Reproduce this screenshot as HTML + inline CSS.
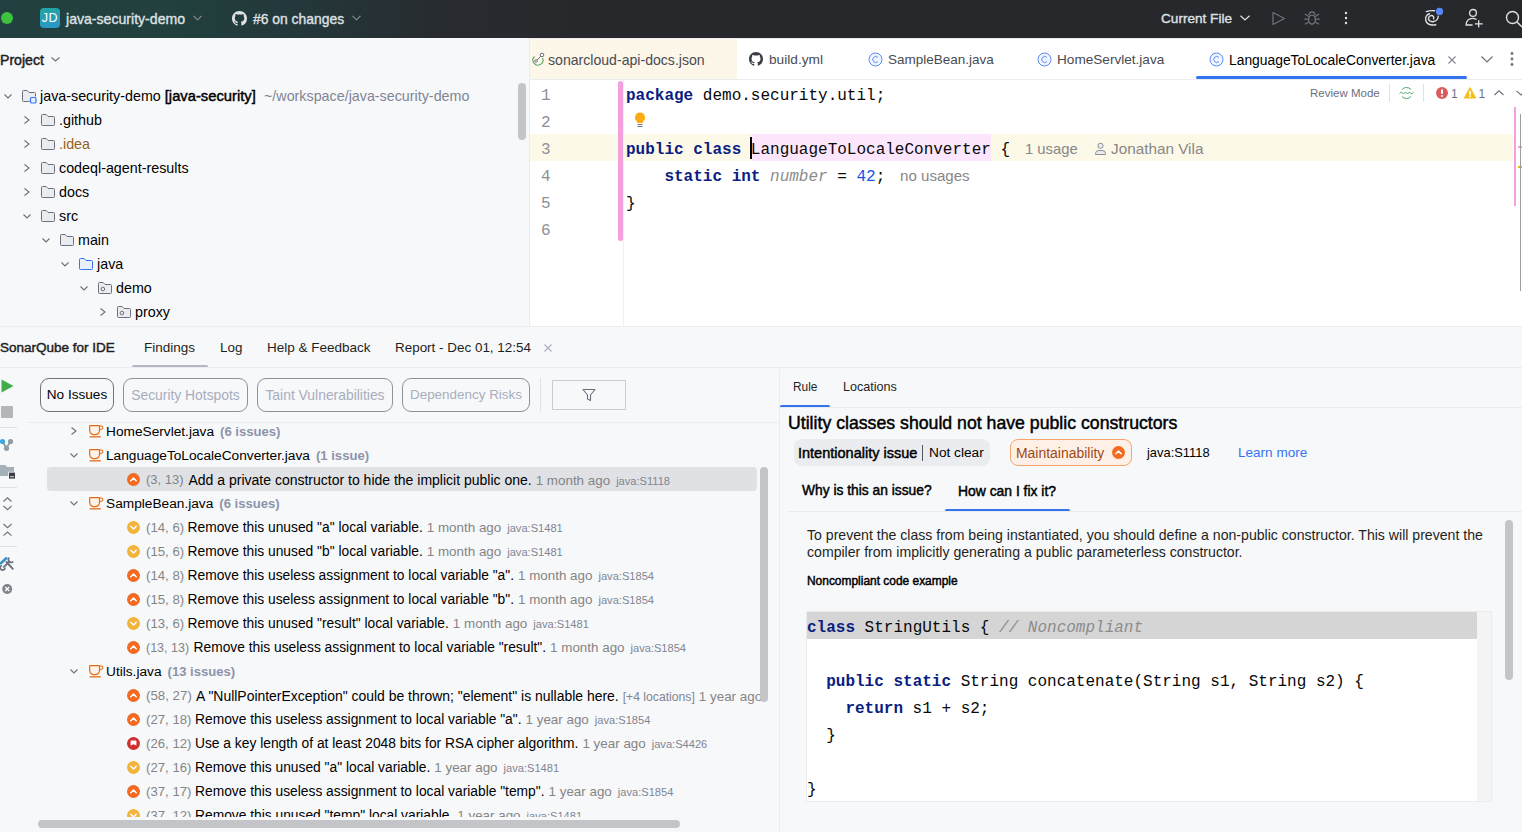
<!DOCTYPE html>
<html><head><meta charset="utf-8">
<style>
*{margin:0;padding:0;box-sizing:border-box}
html,body{width:1522px;height:832px;overflow:hidden;background:#F7F8FA;font-family:"Liberation Sans",sans-serif;color:#000}
.a{position:absolute;white-space:pre}
svg.a{overflow:visible}
.mono{font-family:"Liberation Mono",monospace}
#top{position:absolute;left:0;top:0;width:1522px;height:38px;background:linear-gradient(90deg,#22403F 0px,#21403E 170px,#24373A 300px,#272B2F 440px,#27282C 600px)}
.tw{color:#DFE1E5;font-weight:normal;font-size:14.1px;line-height:16px;-webkit-text-stroke:0.35px #DFE1E5}
.sb{font-weight:normal !important;-webkit-text-stroke:0.45px currentColor}
.kw{color:#0A1D82;font-weight:bold}
.code{font-family:"Liberation Mono",monospace;font-size:16px;line-height:27px;color:#080808}
</style></head><body>

<div id="top">
  <div class="a" style="left:1px;top:12px;width:12px;height:12px;border-radius:6px;background:#3EC23E"></div>
  <div class="a" style="left:40px;top:8px;width:20px;height:20px;border-radius:4px;background:linear-gradient(160deg,#22A6A0,#2A95CC);color:#fff;font-size:12.5px;line-height:20px;text-align:center;letter-spacing:0.5px">JD</div>
  <div class="a tw" style="left:66px;top:11px">java-security-demo</div>
  <svg class="a" style="left:193px;top:15px" width="9" height="6" viewBox="0 0 9 6"><path d="M0.5 0.8L4.5 4.8L8.5 0.8" fill="none" stroke="#8C9096" stroke-width="1.1"/></svg>
  <svg class="a" style="left:232px;top:11px" width="15" height="15" viewBox="0 0 16 16"><path fill="#DFE1E5" d="M8 0C3.58 0 0 3.58 0 8c0 3.54 2.29 6.53 5.47 7.59.4.07.55-.17.55-.38 0-.19-.01-.82-.01-1.49-2.01.37-2.530-.49-2.69-.94-.09-.23-.48-.94-.82-1.13-.28-.15-.68-.52-.01-.53.63-.01 1.08.58 1.23.82.72 1.21 1.87.87 2.33.66.07-.52.28-.87.51-1.07-1.78-.2-3.64-.89-3.64-3.95 0-.87.31-1.59.82-2.15-.08-.2-.36-1.020.08-2.12 0 0 .67-.21 2.2.82.64-.18 1.32-.27 2-.27.68 0 1.36.09 2 .27 1.53-1.04 2.2-.82 2.2-.82.44 1.1.16 1.92.08 2.12.51.56.82 1.27.82 2.15 0 3.07-1.87 3.75-3.65 3.95.29.25.54.73.54 1.48 0 1.07-.01 1.93-.01 2.2 0 .21.15.46.55.38A8.013 8.013 0 0016 8c0-4.42-3.58-8-8-8z"/></svg>
  <div class="a tw" style="left:253px;top:11px;font-size:13.9px">#6 on changes</div>
  <svg class="a" style="left:352px;top:15px" width="9" height="6" viewBox="0 0 9 6"><path d="M0.5 0.8L4.5 4.8L8.5 0.8" fill="none" stroke="#8C9096" stroke-width="1.1"/></svg>
  <div class="a tw" style="left:1161px;top:11px;font-size:13.6px">Current File</div>
  <svg class="a" style="left:1240px;top:15px" width="10" height="6" viewBox="0 0 10 6"><path d="M0.5 0.8L5 5L9.5 0.8" fill="none" stroke="#DFE1E5" stroke-width="1.2"/></svg>
  <svg class="a" style="left:1271px;top:11px" width="15" height="15" viewBox="0 0 15 15"><path d="M2 1.5L13.5 7.5L2 13.5Z" fill="none" stroke="#6F737A" stroke-width="1.2" stroke-linejoin="round"/></svg>
  <svg class="a" style="left:1304px;top:10px" width="16" height="16" viewBox="0 0 16 16" fill="none" stroke="#6F737A" stroke-width="1.3" stroke-linecap="round"><path d="M5.3 4.6A2.7 2.7 0 0 1 10.7 4.6"/><ellipse cx="8" cy="9.6" rx="3.4" ry="4.5"/><path d="M1.3 4.3L4.5 6.2M0.8 9.2H4.5M1.3 14L4.5 12.2M14.7 4.3L11.5 6.2M15.2 9.2H11.5M14.7 14L11.5 12.2"/></svg>
  <svg class="a" style="left:1344px;top:10px" width="4" height="16" viewBox="0 0 4 16"><circle cx="2" cy="3" r="1.2" fill="#DFE1E5"/><circle cx="2" cy="8" r="1.2" fill="#DFE1E5"/><circle cx="2" cy="13" r="1.2" fill="#DFE1E5"/></svg>
  <svg class="a" style="left:1420px;top:4px" width="26" height="26" viewBox="0 0 26 26" fill="none" stroke="#DFE1E5" stroke-width="1.4" stroke-linecap="round"><path d="M6.3 7.6Q10.5 6.2 14.5 6.8"/><path d="M13.5 14.8C14.5 13 13 11.3 11 11.6C8.3 12 7.6 15.3 9.6 16.8C11.8 18.5 16 17.6 17.5 15C18.2 13.8 18.3 12.8 18.2 12.2"/><path d="M9.5 9.8C6.5 10.5 5 13.5 5.8 16.5C6.8 20 11 21.5 15.8 20.8"/><circle cx="19.5" cy="7.4" r="3.6" fill="#548AF7" stroke="none"/></svg>
  <svg class="a" style="left:1460px;top:4px" width="30" height="28" viewBox="0 0 30 28" fill="none" stroke="#DFE1E5" stroke-width="1.3"><circle cx="13" cy="8.9" r="3.4"/><path d="M16.5 15.6C15.3 14.7 14 14.3 12.6 14.3C9 14.3 6.2 16.8 6.1 21H12.6"/><path d="M18.7 16.3V23.6M14.9 19.9H22.8"/></svg>
  <svg class="a" style="left:1505px;top:10px" width="18" height="18" viewBox="0 0 18 18" fill="none" stroke="#DFE1E5" stroke-width="1.4"><circle cx="7.5" cy="7.5" r="6"/><path d="M12 12l5 5"/></svg>
</div>
<div class="a sb" style="left:0px;top:52.0px;font-size:14.1px;line-height:16px;color:#1E1F22;font-weight:normal;">Project</div>
<svg class="a" style="left:51px;top:57px" width="9" height="5" viewBox="0 0 9 5"><path d="M0.5 0.5L4.5 4L8.5 0.5" fill="none" stroke="#6C707E" stroke-width="1.1"/></svg>
<svg class="a" style="left:4px;top:94px" width="8" height="5" viewBox="0 0 8 5"><path d="M0.5 0.5L4.0 4L7.5 0.5" fill="none" stroke="#6C707E" stroke-width="1.1"/></svg>
<svg class="a" style="left:22px;top:90px" width="16" height="14" viewBox="0 0 16 14"><path d="M7.5 11.5H1.5A1 1 0 0 1 0.5 10.5V1.5A1 1 0 0 1 1.5 0.5H5.2L7 2.5H12.5A1 1 0 0 1 13.5 3.5V6.5" fill="#EBECF0" stroke="#6C707E" stroke-width="1"/><rect x="8.5" y="7.5" width="5.5" height="5.5" rx="1.3" fill="#E7EFFD" stroke="#3574F0" stroke-width="1.2"/></svg>
<div class="a " style="left:40px;top:87.0px;font-size:14.3px;line-height:18px;color:#000;font-weight:normal;">java-security-demo <span class="sb" style="font-size:14.75px">[java-security]</span></div>
<div class="a " style="left:264px;top:87.0px;font-size:14.3px;line-height:18px;color:#818594;font-weight:normal;">~/workspace/java-security-demo</div>
<svg class="a" style="left:24px;top:116px" width="6" height="8" viewBox="0 0 6 8"><path d="M0.5 0.5L5 4.0L0.5 7.5" fill="none" stroke="#6C707E" stroke-width="1.1"/></svg>
<svg class="a" style="left:41px;top:114px" width="16" height="14" viewBox="0 0 16 14"><path d="M1.5 0.5H5.2L7 2.5H12.5A1 1 0 0 1 13.5 3.5V10.5A1 1 0 0 1 12.5 11.5H1.5A1 1 0 0 1 0.5 10.5V1.5A1 1 0 0 1 1.5 0.5Z" fill="#EBECF0" stroke="#6C707E" stroke-width="1"/></svg>
<div class="a " style="left:59px;top:111.0px;font-size:14.3px;line-height:18px;color:#000;font-weight:normal;">.github</div>
<svg class="a" style="left:24px;top:140px" width="6" height="8" viewBox="0 0 6 8"><path d="M0.5 0.5L5 4.0L0.5 7.5" fill="none" stroke="#6C707E" stroke-width="1.1"/></svg>
<svg class="a" style="left:41px;top:138px" width="16" height="14" viewBox="0 0 16 14"><path d="M1.5 0.5H5.2L7 2.5H12.5A1 1 0 0 1 13.5 3.5V10.5A1 1 0 0 1 12.5 11.5H1.5A1 1 0 0 1 0.5 10.5V1.5A1 1 0 0 1 1.5 0.5Z" fill="#EBECF0" stroke="#6C707E" stroke-width="1"/></svg>
<div class="a " style="left:59px;top:135.0px;font-size:14.3px;line-height:18px;color:#94621C;font-weight:normal;">.idea</div>
<svg class="a" style="left:24px;top:164px" width="6" height="8" viewBox="0 0 6 8"><path d="M0.5 0.5L5 4.0L0.5 7.5" fill="none" stroke="#6C707E" stroke-width="1.1"/></svg>
<svg class="a" style="left:41px;top:162px" width="16" height="14" viewBox="0 0 16 14"><path d="M1.5 0.5H5.2L7 2.5H12.5A1 1 0 0 1 13.5 3.5V10.5A1 1 0 0 1 12.5 11.5H1.5A1 1 0 0 1 0.5 10.5V1.5A1 1 0 0 1 1.5 0.5Z" fill="#EBECF0" stroke="#6C707E" stroke-width="1"/></svg>
<div class="a " style="left:59px;top:159.0px;font-size:14.3px;line-height:18px;color:#000;font-weight:normal;">codeql-agent-results</div>
<svg class="a" style="left:24px;top:188px" width="6" height="8" viewBox="0 0 6 8"><path d="M0.5 0.5L5 4.0L0.5 7.5" fill="none" stroke="#6C707E" stroke-width="1.1"/></svg>
<svg class="a" style="left:41px;top:186px" width="16" height="14" viewBox="0 0 16 14"><path d="M1.5 0.5H5.2L7 2.5H12.5A1 1 0 0 1 13.5 3.5V10.5A1 1 0 0 1 12.5 11.5H1.5A1 1 0 0 1 0.5 10.5V1.5A1 1 0 0 1 1.5 0.5Z" fill="#EBECF0" stroke="#6C707E" stroke-width="1"/></svg>
<div class="a " style="left:59px;top:183.0px;font-size:14.3px;line-height:18px;color:#000;font-weight:normal;">docs</div>
<svg class="a" style="left:23px;top:214px" width="8" height="5" viewBox="0 0 8 5"><path d="M0.5 0.5L4.0 4L7.5 0.5" fill="none" stroke="#6C707E" stroke-width="1.1"/></svg>
<svg class="a" style="left:41px;top:210px" width="16" height="14" viewBox="0 0 16 14"><path d="M1.5 0.5H5.2L7 2.5H12.5A1 1 0 0 1 13.5 3.5V10.5A1 1 0 0 1 12.5 11.5H1.5A1 1 0 0 1 0.5 10.5V1.5A1 1 0 0 1 1.5 0.5Z" fill="#EBECF0" stroke="#6C707E" stroke-width="1"/></svg>
<div class="a " style="left:59px;top:207.0px;font-size:14.3px;line-height:18px;color:#000;font-weight:normal;">src</div>
<svg class="a" style="left:42px;top:238px" width="8" height="5" viewBox="0 0 8 5"><path d="M0.5 0.5L4.0 4L7.5 0.5" fill="none" stroke="#6C707E" stroke-width="1.1"/></svg>
<svg class="a" style="left:60px;top:234px" width="16" height="14" viewBox="0 0 16 14"><path d="M1.5 0.5H5.2L7 2.5H12.5A1 1 0 0 1 13.5 3.5V10.5A1 1 0 0 1 12.5 11.5H1.5A1 1 0 0 1 0.5 10.5V1.5A1 1 0 0 1 1.5 0.5Z" fill="#EBECF0" stroke="#6C707E" stroke-width="1"/></svg>
<div class="a " style="left:78px;top:231.0px;font-size:14.3px;line-height:18px;color:#000;font-weight:normal;">main</div>
<svg class="a" style="left:61px;top:262px" width="8" height="5" viewBox="0 0 8 5"><path d="M0.5 0.5L4.0 4L7.5 0.5" fill="none" stroke="#6C707E" stroke-width="1.1"/></svg>
<svg class="a" style="left:79px;top:258px" width="16" height="14" viewBox="0 0 16 14"><path d="M1.5 0.5H5.2L7 2.5H12.5A1 1 0 0 1 13.5 3.5V10.5A1 1 0 0 1 12.5 11.5H1.5A1 1 0 0 1 0.5 10.5V1.5A1 1 0 0 1 1.5 0.5Z" fill="#E7EFFD" stroke="#3574F0" stroke-width="1"/></svg>
<div class="a " style="left:97px;top:255.0px;font-size:14.3px;line-height:18px;color:#000;font-weight:normal;">java</div>
<svg class="a" style="left:80px;top:286px" width="8" height="5" viewBox="0 0 8 5"><path d="M0.5 0.5L4.0 4L7.5 0.5" fill="none" stroke="#6C707E" stroke-width="1.1"/></svg>
<svg class="a" style="left:98px;top:282px" width="16" height="14" viewBox="0 0 16 14"><path d="M1.5 0.5H5.2L7 2.5H12.5A1 1 0 0 1 13.5 3.5V10.5A1 1 0 0 1 12.5 11.5H1.5A1 1 0 0 1 0.5 10.5V1.5A1 1 0 0 1 1.5 0.5Z" fill="#EBECF0" stroke="#6C707E" stroke-width="1"/><circle cx="4.9" cy="7" r="1.8" fill="none" stroke="#6C707E" stroke-width="1"/></svg>
<div class="a " style="left:116px;top:279.0px;font-size:14.3px;line-height:18px;color:#000;font-weight:normal;">demo</div>
<svg class="a" style="left:100px;top:308px" width="6" height="8" viewBox="0 0 6 8"><path d="M0.5 0.5L5 4.0L0.5 7.5" fill="none" stroke="#6C707E" stroke-width="1.1"/></svg>
<svg class="a" style="left:117px;top:306px" width="16" height="14" viewBox="0 0 16 14"><path d="M1.5 0.5H5.2L7 2.5H12.5A1 1 0 0 1 13.5 3.5V10.5A1 1 0 0 1 12.5 11.5H1.5A1 1 0 0 1 0.5 10.5V1.5A1 1 0 0 1 1.5 0.5Z" fill="#EBECF0" stroke="#6C707E" stroke-width="1"/><circle cx="4.9" cy="7" r="1.8" fill="none" stroke="#6C707E" stroke-width="1"/></svg>
<div class="a " style="left:135px;top:303.0px;font-size:14.3px;line-height:18px;color:#000;font-weight:normal;">proxy</div>
<div class="a" style="left:518px;top:83px;width:8px;height:57px;background:#C4C5C8;border-radius:4px"></div>
<div class="a" style="left:529px;top:38px;width:1px;height:288px;background:#EBECF0;"></div>
<div class="a" style="left:530px;top:38px;width:992px;height:288px;background:#FFFFFF;"></div>
<div class="a" style="left:530px;top:38px;width:992px;height:1px;background:#EBECF0;"></div>
<div class="a" style="left:530px;top:79px;width:992px;height:1px;background:#EBECF0;"></div>
<div class="a" style="left:530px;top:39px;width:207px;height:40px;background:#FDF7EA;"></div>
<svg class="a" style="left:531px;top:52px" width="14" height="14" viewBox="0 0 14 14"><path d="M3.5 4.5A5 5 0 1 0 11.5 6" fill="none" stroke="#55A76A" stroke-width="1.1"/><path d="M5.5 8.5L10.5 3.5" stroke="#6C707E" stroke-width="1"/><circle cx="11" cy="3" r="1.8" fill="#fff" stroke="#6C707E" stroke-width="1"/><circle cx="5" cy="9" r="1.3" fill="#fff" stroke="#6C707E" stroke-width="0.9"/></svg>
<div class="a " style="left:548px;top:51.2px;font-size:14.1px;line-height:18px;color:#494B52;font-weight:normal;">sonarcloud-api-docs.json</div>
<svg class="a" style="left:749px;top:52px" width="14" height="14" viewBox="0 0 16 16"><path fill="#3C3F45" d="M8 0C3.58 0 0 3.58 0 8c0 3.54 2.29 6.53 5.47 7.59.4.07.55-.17.55-.38 0-.19-.01-.82-.01-1.49-2.01.37-2.53-.49-2.69-.94-.09-.23-.48-.94-.82-1.13-.28-.15-.68-.52-.01-.53.63-.01 1.08.58 1.23.82.72 1.21 1.87.87 2.33.66.07-.52.28-.87.51-1.07-1.78-.2-3.64-.89-3.64-3.95 0-.87.31-1.59.82-2.15-.08-.2-.36-1.02.08-2.12 0 0 .67-.21 2.2.82.64-.18 1.32-.27 2-.27.68 0 1.36.09 2 .27 1.53-1.04 2.2-.82 2.2-.82.44 1.1.16 1.92.08 2.12.51.56.82 1.27.82 2.15 0 3.07-1.87 3.75-3.65 3.95.29.25.54.73.54 1.48 0 1.07-.01 1.93-.01 2.2 0 .21.15.46.55.38A8.013 8.013 0 0016 8c0-4.42-3.58-8-8-8z"/></svg>
<div class="a " style="left:769px;top:51.2px;font-size:13.7px;line-height:18px;color:#494B52;font-weight:normal;">build.yml</div>
<svg class="a" style="left:868px;top:52px" width="15" height="15" viewBox="0 0 15 15"><circle cx="7.5" cy="7.5" r="6.5" fill="#EEF3FD" stroke="#5C8DF2" stroke-width="1"/><path d="M9.8 5.3A3 3 0 1 0 9.8 9.7" fill="none" stroke="#5C8DF2" stroke-width="1"/></svg>
<div class="a " style="left:888px;top:51.2px;font-size:13.5px;line-height:18px;color:#494B52;font-weight:normal;">SampleBean.java</div>
<svg class="a" style="left:1037px;top:52px" width="15" height="15" viewBox="0 0 15 15"><circle cx="7.5" cy="7.5" r="6.5" fill="#EEF3FD" stroke="#5C8DF2" stroke-width="1"/><path d="M9.8 5.3A3 3 0 1 0 9.8 9.7" fill="none" stroke="#5C8DF2" stroke-width="1"/></svg>
<div class="a " style="left:1057px;top:51.2px;font-size:13.6px;line-height:18px;color:#494B52;font-weight:normal;">HomeServlet.java</div>
<svg class="a" style="left:1209px;top:52px" width="15" height="15" viewBox="0 0 15 15"><circle cx="7.5" cy="7.5" r="6.5" fill="#EEF3FD" stroke="#5C8DF2" stroke-width="1"/><path d="M9.8 5.3A3 3 0 1 0 9.8 9.7" fill="none" stroke="#5C8DF2" stroke-width="1"/></svg>
<div class="a " style="left:1229px;top:51.2px;font-size:13.85px;line-height:18px;color:#000000;font-weight:normal;">LanguageToLocaleConverter.java</div>
<svg class="a" style="left:1448px;top:56px" width="8" height="8" viewBox="0 0 8 8"><path d="M0.5 0.5L7.5 7.5M7.5 0.5L0.5 7.5" stroke="#818594" stroke-width="1.1"/></svg>
<div class="a" style="left:1196px;top:76px;width:271px;height:3px;background:#3574F0;border-radius:1.5px"></div>
<svg class="a" style="left:1481px;top:56px" width="12" height="7" viewBox="0 0 12 7"><path d="M0.5 0.5L6.0 6L11.5 0.5" fill="none" stroke="#6C707E" stroke-width="1.2"/></svg>
<svg class="a" style="left:1510px;top:51px" width="4" height="16" viewBox="0 0 4 16"><circle cx="2" cy="2.5" r="1.4" fill="#6C707E"/><circle cx="2" cy="8" r="1.4" fill="#6C707E"/><circle cx="2" cy="13.5" r="1.4" fill="#6C707E"/></svg>
<div class="a " style="left:1310px;top:85.0px;font-size:11.5px;line-height:16px;color:#6C707E;font-weight:normal;">Review Mode</div>
<div class="a" style="left:1389px;top:84px;width:1px;height:18px;background:#DFE1E5;"></div>
<svg class="a" style="left:1399px;top:86px" width="15" height="14" viewBox="0 0 15 14" fill="none" stroke="#55A76A" stroke-width="1"><path d="M3 3.5A6 6 0 0 1 12 3.5"/><path d="M3 10.5A6 6 0 0 0 12 10.5"/><path d="M0.5 7.5L2.5 6L4.5 8L6.5 6L8.5 8L10.5 6L12.5 8L14.5 6.5"/></svg>
<div class="a" style="left:1423px;top:84px;width:1px;height:18px;background:#DFE1E5;"></div>
<svg class="a" style="left:1436px;top:87px" width="12" height="12" viewBox="0 0 12 12"><circle cx="6" cy="6" r="6" fill="#DB5C5C"/><rect x="5" y="2.3" width="2" height="4.6" rx="1" fill="#fff"/><circle cx="6" cy="9" r="1.05" fill="#fff"/></svg>
<div class="a " style="left:1451px;top:85.5px;font-size:12px;line-height:16px;color:#6C707E;font-weight:normal;">1</div>
<svg class="a" style="left:1464px;top:87px" width="12" height="12" viewBox="0 0 12 12"><path d="M6 0.8L11.5 11H0.5Z" fill="#F2BF1B" stroke="#F2BF1B" stroke-width="1.2" stroke-linejoin="round"/><rect x="5.1" y="3.8" width="1.8" height="4" rx="0.9" fill="#fff"/><circle cx="6" cy="9.3" r="0.95" fill="#fff"/></svg>
<div class="a " style="left:1478.5px;top:85.5px;font-size:12px;line-height:16px;color:#6C707E;font-weight:normal;">1</div>
<svg class="a" style="left:1494px;top:90px" width="10" height="6" viewBox="0 0 10 6"><path d="M0.5 5L5 0.8L9.5 5" fill="none" stroke="#6C707E" stroke-width="1.1"/></svg>
<svg class="a" style="left:1516px;top:90px" width="10" height="6" viewBox="0 0 10 6"><path d="M0.5 0.8L5 5L9.5 0.8" fill="none" stroke="#6C707E" stroke-width="1.1"/></svg>
<div class="a" style="left:530px;top:134px;width:88px;height:27px;background:#FDF9E9;"></div>
<div class="a" style="left:624px;top:134px;width:889px;height:27px;background:#FDF9E9;"></div>
<div class="a" style="left:751px;top:134px;width:240px;height:27px;background:#FBE6FB;"></div>
<div class="a" style="left:623px;top:80px;width:1px;height:246px;background:#F0F0F2;"></div>
<div class="a" style="left:618px;top:81px;width:5px;height:160px;background:#F49FDE;border-radius:2.5px"></div>
<div class="a" style="left:541px;top:82.5px;font-family:'Liberation Mono',monospace;font-size:16px;line-height:27px;color:#8D9095">1</div>
<div class="a" style="left:541px;top:109.5px;font-family:'Liberation Mono',monospace;font-size:16px;line-height:27px;color:#8D9095">2</div>
<div class="a" style="left:541px;top:136.5px;font-family:'Liberation Mono',monospace;font-size:16px;line-height:27px;color:#8D9095">3</div>
<div class="a" style="left:541px;top:163.5px;font-family:'Liberation Mono',monospace;font-size:16px;line-height:27px;color:#8D9095">4</div>
<div class="a" style="left:541px;top:190.5px;font-family:'Liberation Mono',monospace;font-size:16px;line-height:27px;color:#8D9095">5</div>
<div class="a" style="left:541px;top:217.5px;font-family:'Liberation Mono',monospace;font-size:16px;line-height:27px;color:#8D9095">6</div>
<svg class="a" style="left:634px;top:112px" width="12" height="16" viewBox="0 0 12 16"><path d="M6 0.5A5 5 0 0 0 3 9.5V11H9V9.5A5 5 0 0 0 6 0.5Z" fill="#FFAA10"/><path d="M3.5 12.5H8.5M3.5 14.5H8.5" stroke="#6C707E" stroke-width="1"/></svg>
<div class="a code" style="left:626px;top:82.5px;white-space:pre"><span class="kw">package</span> demo.security.util;</div>
<div class="a code" style="left:626px;top:136.5px;white-space:pre"><span class="kw">public</span> <span class="kw">class</span> LanguageToLocaleConverter {</div>
<div class="a code" style="left:626px;top:163.5px;white-space:pre">    <span class="kw">static</span> <span class="kw">int</span> <i style="color:#8C8C8C">number</i> = <span style="color:#1750EB">42</span>;</div>
<div class="a code" style="left:626px;top:190.5px;white-space:pre">}</div>
<div class="a" style="left:750px;top:137px;width:2px;height:22px;background:#000;"></div>
<div class="a " style="left:1025px;top:140.0px;font-size:14.8px;line-height:18px;color:#878787;font-weight:normal;">1 usage</div>
<svg class="a" style="left:1094px;top:142px" width="13" height="13" viewBox="0 0 13 13" fill="none" stroke="#8A8D94" stroke-width="1"><circle cx="6.5" cy="3.8" r="2.6" fill="#EBECF0"/><path d="M1.5 12.5V11.5A3.5 3 0 0 1 5 8.5H8A3.5 3 0 0 1 11.5 11.5V12.5Z" fill="#EBECF0"/></svg>
<div class="a " style="left:1111px;top:140.0px;font-size:15.3px;line-height:18px;color:#878787;font-weight:normal;">Jonathan Vila</div>
<div class="a " style="left:900px;top:167.0px;font-size:15.1px;line-height:18px;color:#878787;font-weight:normal;">no usages</div>
<div class="a" style="left:1514px;top:107px;width:2px;height:99px;background:#F49FDE;"></div>
<div class="a" style="left:1518px;top:146px;width:4px;height:2px;background:#F49FDE;"></div>
<div class="a" style="left:1518px;top:166px;width:4px;height:2px;background:#E6B800;"></div>
<div class="a" style="left:1520px;top:114px;width:1px;height:177px;background:#9A9DA3;"></div>
<div class="a" style="left:0px;top:326px;width:1522px;height:1px;background:#EBECF0;"></div>
<div class="a sb" style="left:0px;top:338.6px;font-size:13.5px;line-height:18px;color:#1E1F22;font-weight:normal;">SonarQube for IDE</div>
<div class="a " style="left:144px;top:338.6px;font-size:13.5px;line-height:18px;color:#1E1F22;font-weight:normal;">Findings</div>
<div class="a" style="left:132px;top:365px;width:76px;height:3px;background:#B4B8C4;border-radius:1.5px"></div>
<div class="a " style="left:220px;top:338.6px;font-size:13.4px;line-height:18px;color:#1E1F22;font-weight:normal;">Log</div>
<div class="a " style="left:267px;top:338.6px;font-size:13.5px;line-height:18px;color:#1E1F22;font-weight:normal;">Help &amp; Feedback</div>
<div class="a " style="left:395px;top:338.6px;font-size:13.45px;line-height:18px;color:#1E1F22;font-weight:normal;">Report - Dec 01, 12:54</div>
<svg class="a" style="left:544px;top:344px" width="8" height="8" viewBox="0 0 8 8"><path d="M0.5 0.5L7.5 7.5M7.5 0.5L0.5 7.5" stroke="#A8ADBD" stroke-width="1.1"/></svg>
<div class="a" style="left:0px;top:367px;width:1522px;height:1px;background:#EBECF0;"></div>
<svg class="a" style="left:1px;top:379px" width="13" height="14" viewBox="0 0 13 14"><path d="M0.5 0.5L12.5 7L0.5 13.5Z" fill="#3FAE4A"/></svg>
<div class="a" style="left:1px;top:406px;width:12px;height:12px;background:#B4B6BA;border-radius:1px"></div>
<div class="a" style="left:0px;top:427px;width:17px;height:1px;background:#DFE1E5;"></div>
<svg class="a" style="left:0px;top:436px" width="14" height="15" viewBox="0 0 14 15"><path d="M3 6.5L6.3 11.5M10 6.5L6.7 11.5" stroke="#8F9BA6" stroke-width="1.8"/><circle cx="2.5" cy="5.5" r="2.6" fill="#3BA7DC"/><circle cx="10.5" cy="5.5" r="2.6" fill="#8F9BA6"/><circle cx="6.5" cy="12.3" r="2.6" fill="#8F9BA6"/></svg>
<svg class="a" style="left:0px;top:464px" width="16" height="16" viewBox="0 0 16 16"><path d="M0 1H5.3L7 3H14V12H0Z" fill="#A6B0B9"/><rect x="8.2" y="7.8" width="7.3" height="7.4" fill="#F7F8FA"/><rect x="9" y="8.6" width="6" height="6" fill="#3C3F45"/><rect x="10.2" y="12.2" width="3.6" height="1" fill="#E0E0E0"/></svg>
<div class="a" style="left:0px;top:487px;width:17px;height:1px;background:#DFE1E5;"></div>
<svg class="a" style="left:3px;top:497px" width="9" height="14" viewBox="0 0 9 14" fill="none" stroke="#6C707E" stroke-width="1.1"><path d="M0.5 4.5L4.5 0.8L8.5 4.5M0.5 9L4.5 12.7L8.5 9"/></svg>
<svg class="a" style="left:3px;top:523px" width="9" height="14" viewBox="0 0 9 14" fill="none" stroke="#6C707E" stroke-width="1.1"><path d="M0.5 1L4.5 4.7L8.5 1M0.5 12.7L4.5 9L8.5 12.7"/></svg>
<div class="a" style="left:0px;top:546px;width:17px;height:1px;background:#DFE1E5;"></div>
<svg class="a" style="left:0px;top:555px" width="15" height="16" viewBox="0 0 15 16"><path d="M0.8 8.3L6.3 3.3" stroke="#3592C4" stroke-width="2.6" stroke-linecap="round"/><path d="M6.5 7L12.8 13.8" stroke="#6C707E" stroke-width="1.9" stroke-linecap="round"/><path d="M3.3 12.6L10 6" stroke="#6C707E" stroke-width="1.8"/><path d="M9.2 2.6A2.8 2.8 0 1 0 13.2 6.6" fill="none" stroke="#6C707E" stroke-width="1.7"/><path d="M5 12.8A2.4 2.4 0 1 1 2 10.4" fill="none" stroke="#6C707E" stroke-width="1.6"/></svg>
<svg class="a" style="left:2px;top:584px" width="11" height="11" viewBox="0 0 11 11"><circle cx="5.2" cy="5" r="5" fill="#7F838B"/><path d="M3.2 3L7.2 7M7.2 3L3.2 7" stroke="#fff" stroke-width="1.3"/></svg>
<div class="a" style="left:40px;top:378px;width:74px;height:34px;border:1px solid #6F737A;border-radius:9px;text-align:center;font-size:13.6px;line-height:32px;color:#000">No Issues</div>
<div class="a" style="left:123px;top:378px;width:125px;height:34px;border:1px solid #8E9197;border-radius:9px;text-align:center;font-size:13.85px;line-height:32px;color:#A8ADBD">Security Hotspots</div>
<div class="a" style="left:257px;top:378px;width:136px;height:34px;border:1px solid #8E9197;border-radius:9px;text-align:center;font-size:13.9px;line-height:32px;color:#A8ADBD">Taint Vulnerabilities</div>
<div class="a" style="left:402px;top:378px;width:128px;height:34px;border:1px solid #8E9197;border-radius:9px;text-align:center;font-size:13.45px;line-height:32px;color:#A8ADBD">Dependency Risks</div>
<div class="a" style="left:540px;top:378px;width:1px;height:33px;background:#DFE1E5;"></div>
<div class="a" style="left:552px;top:380px;width:74px;height:30px;border:1px solid #C9CCD6"></div>
<svg class="a" style="left:582px;top:388px" width="14" height="14" viewBox="0 0 14 14"><path d="M1 1.5H13L8.5 7V12.5L5.5 11V7Z" fill="none" stroke="#6C707E" stroke-width="1.1" stroke-linejoin="round"/></svg>
<div class="a" style="left:27px;top:422px;width:752px;height:1px;background:#EBECF0;"></div>
<div class="a" style="left:0;top:423px;width:779px;height:394px;overflow:hidden">
<svg class="a" style="left:71px;top:4px" width="6" height="8" viewBox="0 0 6 8"><path d="M0.5 0.5L5 4.0L0.5 7.5" fill="none" stroke="#6C707E" stroke-width="1.1"/></svg>
<svg class="a" style="left:89px;top:2px" width="15" height="13" viewBox="0 0 15 13"><path d="M0.7 0.7H10.5V5.5A4.2 4.2 0 0 1 6.3 9.7H4.9A4.2 4.2 0 0 1 0.7 5.5Z" fill="#FDF3EA" stroke="#E66D17" stroke-width="1.2" stroke-linejoin="round"/><path d="M10.5 1H12.2A1.6 1.6 0 0 1 12.2 4.2L10.4 4.9" fill="none" stroke="#E66D17" stroke-width="1.1"/><path d="M0.6 11.8H11.8" stroke="#E66D17" stroke-width="1.3"/></svg>
<div class="a " style="left:106px;top:0.0px;font-size:13.7px;line-height:18px;color:#000;font-weight:normal;">HomeServlet.java<span style="margin-left:6px;font-weight:bold;color:#8C94AA;font-size:13.1px">(6 issues)</span></div>
<svg class="a" style="left:70px;top:29.5px" width="8" height="5" viewBox="0 0 8 5"><path d="M0.5 0.5L4.0 4L7.5 0.5" fill="none" stroke="#6C707E" stroke-width="1.1"/></svg>
<svg class="a" style="left:89px;top:26px" width="15" height="13" viewBox="0 0 15 13"><path d="M0.7 0.7H10.5V5.5A4.2 4.2 0 0 1 6.3 9.7H4.9A4.2 4.2 0 0 1 0.7 5.5Z" fill="#FDF3EA" stroke="#E66D17" stroke-width="1.2" stroke-linejoin="round"/><path d="M10.5 1H12.2A1.6 1.6 0 0 1 12.2 4.2L10.4 4.9" fill="none" stroke="#E66D17" stroke-width="1.1"/><path d="M0.6 11.8H11.8" stroke="#E66D17" stroke-width="1.3"/></svg>
<div class="a " style="left:106px;top:24.0px;font-size:13.7px;line-height:18px;color:#000;font-weight:normal;">LanguageToLocaleConverter.java<span style="margin-left:6px;font-weight:bold;color:#8C94AA;font-size:13.1px">(1 issue)</span></div>
<div class="a" style="left:47px;top:44px;width:710px;height:24px;background:#DFE1E5;border-radius:4px"></div>
<svg class="a" style="left:127px;top:49.5px" width="13" height="13" viewBox="0 0 13 13"><circle cx="6.5" cy="6.5" r="6.5" fill="#F26B21"/><path d="M3.8 7.8L6.5 5.1L9.2 7.8" fill="none" stroke="#fff" stroke-width="1.5" stroke-linecap="round" stroke-linejoin="round"/></svg>
<div class="a " style="left:146px;top:48.0px;font-size:13.0px;line-height:18px;color:#858585;font-weight:normal;">(3, 13)</div>
<div class="a " style="left:188.5px;top:48.0px;font-size:14.0px;line-height:18px;color:#000;font-weight:normal;">Add a private constructor to hide the implicit public one.<span style="margin-left:4px;color:#858585;font-size:13.4px">1 month ago</span><span style="margin-left:6px;font-size:11.1px;color:#818594">java:S1118</span></div>
<svg class="a" style="left:70px;top:77.5px" width="8" height="5" viewBox="0 0 8 5"><path d="M0.5 0.5L4.0 4L7.5 0.5" fill="none" stroke="#6C707E" stroke-width="1.1"/></svg>
<svg class="a" style="left:89px;top:74px" width="15" height="13" viewBox="0 0 15 13"><path d="M0.7 0.7H10.5V5.5A4.2 4.2 0 0 1 6.3 9.7H4.9A4.2 4.2 0 0 1 0.7 5.5Z" fill="#FDF3EA" stroke="#E66D17" stroke-width="1.2" stroke-linejoin="round"/><path d="M10.5 1H12.2A1.6 1.6 0 0 1 12.2 4.2L10.4 4.9" fill="none" stroke="#E66D17" stroke-width="1.1"/><path d="M0.6 11.8H11.8" stroke="#E66D17" stroke-width="1.3"/></svg>
<div class="a " style="left:106px;top:72.0px;font-size:13.7px;line-height:18px;color:#000;font-weight:normal;">SampleBean.java<span style="margin-left:6px;font-weight:bold;color:#8C94AA;font-size:13.1px">(6 issues)</span></div>
<svg class="a" style="left:127px;top:97.5px" width="13" height="13" viewBox="0 0 13 13"><circle cx="6.5" cy="6.5" r="6.5" fill="#F2B43C"/><path d="M3.8 5.3L6.5 8L9.2 5.3" fill="none" stroke="#fff" stroke-width="1.5" stroke-linecap="round" stroke-linejoin="round"/></svg>
<div class="a " style="left:146px;top:96.0px;font-size:13.2px;line-height:18px;color:#858585;font-weight:normal;">(14, 6)</div>
<div class="a " style="left:187.5px;top:96.0px;font-size:13.8px;line-height:18px;color:#000;font-weight:normal;">Remove this unused "a" local variable.<span style="margin-left:4px;color:#858585;font-size:13.4px">1 month ago</span><span style="margin-left:6px;font-size:11.1px;color:#818594">java:S1481</span></div>
<svg class="a" style="left:127px;top:121.5px" width="13" height="13" viewBox="0 0 13 13"><circle cx="6.5" cy="6.5" r="6.5" fill="#F2B43C"/><path d="M3.8 5.3L6.5 8L9.2 5.3" fill="none" stroke="#fff" stroke-width="1.5" stroke-linecap="round" stroke-linejoin="round"/></svg>
<div class="a " style="left:146px;top:120.0px;font-size:13.2px;line-height:18px;color:#858585;font-weight:normal;">(15, 6)</div>
<div class="a " style="left:187.5px;top:120.0px;font-size:13.8px;line-height:18px;color:#000;font-weight:normal;">Remove this unused "b" local variable.<span style="margin-left:4px;color:#858585;font-size:13.4px">1 month ago</span><span style="margin-left:6px;font-size:11.1px;color:#818594">java:S1481</span></div>
<svg class="a" style="left:127px;top:145.5px" width="13" height="13" viewBox="0 0 13 13"><circle cx="6.5" cy="6.5" r="6.5" fill="#F26B21"/><path d="M3.8 7.8L6.5 5.1L9.2 7.8" fill="none" stroke="#fff" stroke-width="1.5" stroke-linecap="round" stroke-linejoin="round"/></svg>
<div class="a " style="left:146px;top:144.0px;font-size:13.2px;line-height:18px;color:#858585;font-weight:normal;">(14, 8)</div>
<div class="a " style="left:187.5px;top:144.0px;font-size:13.8px;line-height:18px;color:#000;font-weight:normal;">Remove this useless assignment to local variable "a".<span style="margin-left:4px;color:#858585;font-size:13.4px">1 month ago</span><span style="margin-left:6px;font-size:11.1px;color:#818594">java:S1854</span></div>
<svg class="a" style="left:127px;top:169.5px" width="13" height="13" viewBox="0 0 13 13"><circle cx="6.5" cy="6.5" r="6.5" fill="#F26B21"/><path d="M3.8 7.8L6.5 5.1L9.2 7.8" fill="none" stroke="#fff" stroke-width="1.5" stroke-linecap="round" stroke-linejoin="round"/></svg>
<div class="a " style="left:146px;top:168.0px;font-size:13.2px;line-height:18px;color:#858585;font-weight:normal;">(15, 8)</div>
<div class="a " style="left:187.5px;top:168.0px;font-size:13.8px;line-height:18px;color:#000;font-weight:normal;">Remove this useless assignment to local variable "b".<span style="margin-left:4px;color:#858585;font-size:13.4px">1 month ago</span><span style="margin-left:6px;font-size:11.1px;color:#818594">java:S1854</span></div>
<svg class="a" style="left:127px;top:193.5px" width="13" height="13" viewBox="0 0 13 13"><circle cx="6.5" cy="6.5" r="6.5" fill="#F2B43C"/><path d="M3.8 5.3L6.5 8L9.2 5.3" fill="none" stroke="#fff" stroke-width="1.5" stroke-linecap="round" stroke-linejoin="round"/></svg>
<div class="a " style="left:146px;top:192.0px;font-size:13.2px;line-height:18px;color:#858585;font-weight:normal;">(13, 6)</div>
<div class="a " style="left:187.5px;top:192.0px;font-size:13.8px;line-height:18px;color:#000;font-weight:normal;">Remove this unused "result" local variable.<span style="margin-left:4px;color:#858585;font-size:13.4px">1 month ago</span><span style="margin-left:6px;font-size:11.1px;color:#818594">java:S1481</span></div>
<svg class="a" style="left:127px;top:217.5px" width="13" height="13" viewBox="0 0 13 13"><circle cx="6.5" cy="6.5" r="6.5" fill="#F26B21"/><path d="M3.8 7.8L6.5 5.1L9.2 7.8" fill="none" stroke="#fff" stroke-width="1.5" stroke-linecap="round" stroke-linejoin="round"/></svg>
<div class="a " style="left:146px;top:216.0px;font-size:12.5px;line-height:18px;color:#858585;font-weight:normal;">(13, 13)</div>
<div class="a " style="left:193.5px;top:216.0px;font-size:13.8px;line-height:18px;color:#000;font-weight:normal;">Remove this useless assignment to local variable "result".<span style="margin-left:4px;color:#858585;font-size:13.4px">1 month ago</span><span style="margin-left:6px;font-size:11.1px;color:#818594">java:S1854</span></div>
<svg class="a" style="left:70px;top:245.5px" width="8" height="5" viewBox="0 0 8 5"><path d="M0.5 0.5L4.0 4L7.5 0.5" fill="none" stroke="#6C707E" stroke-width="1.1"/></svg>
<svg class="a" style="left:89px;top:242px" width="15" height="13" viewBox="0 0 15 13"><path d="M0.7 0.7H10.5V5.5A4.2 4.2 0 0 1 6.3 9.7H4.9A4.2 4.2 0 0 1 0.7 5.5Z" fill="#FDF3EA" stroke="#E66D17" stroke-width="1.2" stroke-linejoin="round"/><path d="M10.5 1H12.2A1.6 1.6 0 0 1 12.2 4.2L10.4 4.9" fill="none" stroke="#E66D17" stroke-width="1.1"/><path d="M0.6 11.8H11.8" stroke="#E66D17" stroke-width="1.3"/></svg>
<div class="a " style="left:106px;top:240.0px;font-size:13.7px;line-height:18px;color:#000;font-weight:normal;">Utils.java<span style="margin-left:6px;font-weight:bold;color:#8C94AA;font-size:13.1px">(13 issues)</span></div>
<svg class="a" style="left:127px;top:265.5px" width="13" height="13" viewBox="0 0 13 13"><circle cx="6.5" cy="6.5" r="6.5" fill="#F26B21"/><path d="M3.8 7.8L6.5 5.1L9.2 7.8" fill="none" stroke="#fff" stroke-width="1.5" stroke-linecap="round" stroke-linejoin="round"/></svg>
<div class="a " style="left:146px;top:264.0px;font-size:13.3px;line-height:18px;color:#858585;font-weight:normal;">(58, 27)</div>
<div class="a " style="left:196px;top:264.0px;font-size:13.95px;line-height:18px;color:#000;font-weight:normal;">A "NullPointerException" could be thrown; "element" is nullable here.<span style="margin-left:4px;font-size:12.2px;color:#818594">[+4 locations]</span><span style="margin-left:4px;color:#858585;font-size:13.4px">1 year ago</span></div>
<svg class="a" style="left:127px;top:289.5px" width="13" height="13" viewBox="0 0 13 13"><circle cx="6.5" cy="6.5" r="6.5" fill="#F26B21"/><path d="M3.8 7.8L6.5 5.1L9.2 7.8" fill="none" stroke="#fff" stroke-width="1.5" stroke-linecap="round" stroke-linejoin="round"/></svg>
<div class="a " style="left:146px;top:288.0px;font-size:13.2px;line-height:18px;color:#858585;font-weight:normal;">(27, 18)</div>
<div class="a " style="left:195px;top:288.0px;font-size:13.8px;line-height:18px;color:#000;font-weight:normal;">Remove this useless assignment to local variable "a".<span style="margin-left:4px;color:#858585;font-size:13.4px">1 year ago</span><span style="margin-left:6px;font-size:11.1px;color:#818594">java:S1854</span></div>
<svg class="a" style="left:127px;top:313.5px" width="13" height="13" viewBox="0 0 13 13"><circle cx="6.5" cy="6.5" r="6.5" fill="#D02F2F"/><path d="M3.6 4.2A0.8 0.8 0 0 1 4.4 3.4H8.6A0.8 0.8 0 0 1 9.4 4.2V8.6L6.5 7.2L3.6 8.6Z" fill="#fff"/></svg>
<div class="a " style="left:146px;top:312.0px;font-size:13.2px;line-height:18px;color:#858585;font-weight:normal;">(26, 12)</div>
<div class="a " style="left:195px;top:312.0px;font-size:13.8px;line-height:18px;color:#000;font-weight:normal;">Use a key length of at least 2048 bits for RSA cipher algorithm.<span style="margin-left:4px;color:#858585;font-size:13.4px">1 year ago</span><span style="margin-left:6px;font-size:11.1px;color:#818594">java:S4426</span></div>
<svg class="a" style="left:127px;top:337.5px" width="13" height="13" viewBox="0 0 13 13"><circle cx="6.5" cy="6.5" r="6.5" fill="#F2B43C"/><path d="M3.8 5.3L6.5 8L9.2 5.3" fill="none" stroke="#fff" stroke-width="1.5" stroke-linecap="round" stroke-linejoin="round"/></svg>
<div class="a " style="left:146px;top:336.0px;font-size:13.2px;line-height:18px;color:#858585;font-weight:normal;">(27, 16)</div>
<div class="a " style="left:195px;top:336.0px;font-size:13.8px;line-height:18px;color:#000;font-weight:normal;">Remove this unused "a" local variable.<span style="margin-left:4px;color:#858585;font-size:13.4px">1 year ago</span><span style="margin-left:6px;font-size:11.1px;color:#818594">java:S1481</span></div>
<svg class="a" style="left:127px;top:361.5px" width="13" height="13" viewBox="0 0 13 13"><circle cx="6.5" cy="6.5" r="6.5" fill="#F26B21"/><path d="M3.8 7.8L6.5 5.1L9.2 7.8" fill="none" stroke="#fff" stroke-width="1.5" stroke-linecap="round" stroke-linejoin="round"/></svg>
<div class="a " style="left:146px;top:360.0px;font-size:13.2px;line-height:18px;color:#858585;font-weight:normal;">(37, 17)</div>
<div class="a " style="left:195px;top:360.0px;font-size:13.8px;line-height:18px;color:#000;font-weight:normal;">Remove this useless assignment to local variable "temp".<span style="margin-left:4px;color:#858585;font-size:13.4px">1 year ago</span><span style="margin-left:6px;font-size:11.1px;color:#818594">java:S1854</span></div>
<svg class="a" style="left:127px;top:385.5px" width="13" height="13" viewBox="0 0 13 13"><circle cx="6.5" cy="6.5" r="6.5" fill="#F2B43C"/><path d="M3.8 5.3L6.5 8L9.2 5.3" fill="none" stroke="#fff" stroke-width="1.5" stroke-linecap="round" stroke-linejoin="round"/></svg>
<div class="a " style="left:146px;top:384.0px;font-size:13.2px;line-height:18px;color:#858585;font-weight:normal;">(37, 12)</div>
<div class="a " style="left:195px;top:384.0px;font-size:13.8px;line-height:18px;color:#000;font-weight:normal;">Remove this unused "temp" local variable.<span style="margin-left:4px;color:#858585;font-size:13.4px">1 year ago</span><span style="margin-left:6px;font-size:11.1px;color:#818594">java:S1481</span></div>
</div>
<div class="a" style="left:757px;top:669px;width:22px;height:24px;background:#F7F8FA;"></div>
<div class="a" style="left:760px;top:467px;width:8px;height:235px;background:#C4C5C8;border-radius:4px"></div>
<div class="a" style="left:38px;top:820px;width:642px;height:8px;background:#C4C5C8;border-radius:4px"></div>
<div class="a" style="left:779px;top:369px;width:1px;height:463px;background:#EBECF0;"></div>
<div class="a " style="left:793px;top:377.5px;font-size:11.9px;line-height:18px;color:#1E1F22;font-weight:normal;">Rule</div>
<div class="a " style="left:843px;top:377.5px;font-size:12.6px;line-height:18px;color:#1E1F22;font-weight:normal;">Locations</div>
<div class="a" style="left:780px;top:405px;width:50px;height:3px;background:#3574F0;border-radius:1.5px"></div>
<div class="a" style="left:780px;top:407px;width:742px;height:1px;background:#EBECF0;"></div>
<div class="a sb" style="left:788px;top:413.0px;font-size:17.7px;line-height:20px;color:#000;font-weight:normal;">Utility classes should not have public constructors</div>
<div class="a" style="left:794px;top:439px;width:196px;height:27px;border-radius:8px;background:#EBECF0"></div>
<div class="a sb" style="left:798px;top:443.5px;font-size:14.5px;line-height:18px;color:#000;font-weight:normal;">Intentionality issue</div>
<div class="a" style="left:922px;top:445px;width:1px;height:16px;background:#55585F;"></div>
<div class="a " style="left:929px;top:443.5px;font-size:13.7px;line-height:18px;color:#000;font-weight:normal;">Not clear</div>
<div class="a" style="left:1010px;top:439px;width:122px;height:27px;border-radius:8px;background:#FEF0E6;border:1px solid #F5A46E"></div>
<div class="a " style="left:1016px;top:443.5px;font-size:13.95px;line-height:18px;color:#9E4A16;font-weight:normal;">Maintainability</div>
<svg class="a" style="left:1112px;top:446px" width="13" height="13" viewBox="0 0 13 13"><circle cx="6.5" cy="6.5" r="6.5" fill="#F26B21"/><path d="M3.8 7.8L6.5 5.1L9.2 7.8" fill="none" stroke="#fff" stroke-width="1.5" stroke-linecap="round" stroke-linejoin="round"/></svg>
<div class="a " style="left:1147px;top:443.5px;font-size:12.9px;line-height:18px;color:#000;font-weight:normal;">java:S1118</div>
<div class="a " style="left:1238px;top:443.5px;font-size:13.55px;line-height:18px;color:#3574F0;font-weight:normal;">Learn more</div>
<div class="a sb" style="left:802px;top:481.5px;font-size:13.8px;line-height:18px;color:#000;font-weight:normal;">Why is this an issue?</div>
<div class="a sb" style="left:958px;top:481.5px;font-size:13.9px;line-height:18px;color:#000;font-weight:normal;">How can I fix it?</div>
<div class="a" style="left:945px;top:509px;width:125px;height:3px;background:#3574F0;border-radius:1.5px"></div>
<div class="a" style="left:788px;top:511px;width:734px;height:1px;background:#EBECF0;"></div>
<div class="a " style="left:807px;top:527.2px;font-size:14.1px;line-height:17px;color:#1E1F22;font-weight:normal;">To prevent the class from being instantiated, you should define a non-public constructor. This will prevent the</div>
<div class="a " style="left:807px;top:544.0px;font-size:14.1px;line-height:17px;color:#1E1F22;font-weight:normal;">compiler from implicitly generating a public parameterless constructor.</div>
<div class="a sb" style="left:807px;top:574.0px;font-size:11.95px;line-height:14px;color:#000;font-weight:normal;">Noncompliant code example</div>
<div class="a" style="left:806px;top:611px;width:686px;height:191px;background:#fff;border:1px solid #EBECF0"></div>
<div class="a" style="left:807px;top:612px;width:670px;height:27px;background:#D5D5D5;"></div>
<div class="a" style="left:1477px;top:612px;width:14px;height:189px;background:#F4F4F4;"></div>
<div class="a code" style="left:807px;top:615.0px;white-space:pre"><span class="kw">class</span> StringUtils { <i style="color:#8C8C8C">// Noncompliant</i></div>
<div class="a code" style="left:807px;top:669.0px;white-space:pre">  <span class="kw">public</span> <span class="kw">static</span> String concatenate(String s1, String s2) {</div>
<div class="a code" style="left:807px;top:696.0px;white-space:pre">    <span class="kw">return</span> s1 + s2;</div>
<div class="a code" style="left:807px;top:723.0px;white-space:pre">  }</div>
<div class="a code" style="left:807px;top:777.0px;white-space:pre">}</div>
<div class="a" style="left:1505px;top:520px;width:8px;height:160px;background:#C4C5C8;border-radius:4px"></div>
</body></html>
